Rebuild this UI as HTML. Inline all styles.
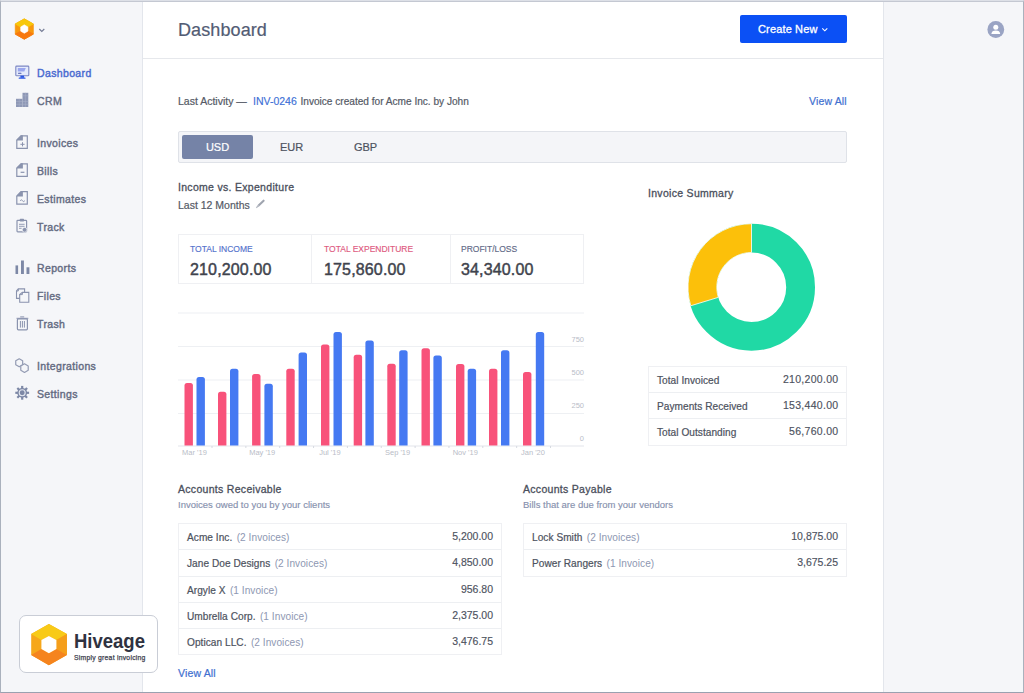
<!DOCTYPE html>
<html><head><meta charset="utf-8"><style>
*{box-sizing:border-box;margin:0;padding:0}
html,body{width:1024px;height:693px;overflow:hidden;background:#fff}
body{font-family:"Liberation Sans",sans-serif;position:relative;color:#4a4f5c}
.a{position:absolute;white-space:nowrap}
svg{position:absolute;overflow:visible;left:0;top:0}
.sb{font-weight:400;-webkit-text-stroke-width:0.3px;letter-spacing:0.3px}
#frame{position:absolute;left:0;top:0;width:1024px;height:693px;border-top:2px solid #dde0e7;border-left:1px solid #aab1bd;border-right:1px solid #aab1bd;border-bottom:1px solid #9aa1b0;z-index:50;pointer-events:none}
#frame:before{content:"";position:absolute;left:0;right:0;top:-1px;height:1px;background:#c4c8d2}
#side{position:absolute;left:0;top:0;width:143px;height:693px;background:#f5f6f9;border-right:1px solid #e3e6ec}
#main{position:absolute;left:143px;top:0;width:740px;height:693px;background:#fff}
#right{position:absolute;left:883px;top:0;width:141px;height:693px;background:#f5f6f9;border-left:1px solid #e3e6ec}
#hdr{position:absolute;left:143px;top:0;width:740px;height:59px;border-bottom:1px solid #e6e8ec}
.nav{font-size:10.5px;color:#646b82;left:37px;line-height:12px;letter-spacing:0.36px;-webkit-text-stroke-width:0.4px}
.nav.on{color:#4869d0}
.t{font-size:10.5px;line-height:12px}
.box{position:absolute;border:1px solid #eff0f3;background:#fff}
.row{position:absolute;left:0;right:0;height:27px;border-top:1px solid #edeff2}
.row:first-child{border-top:none}
.row .l{position:absolute;left:8px;top:7.5px;font-size:10.1px;line-height:12px;color:#4d525e;white-space:nowrap;letter-spacing:0.05px;-webkit-text-stroke-width:0.2px}
.row .r{position:absolute;right:8px;top:6px;font-size:10.5px;line-height:12px;color:#4d525e;white-space:nowrap;-webkit-text-stroke-width:0.15px}
.sum .r{letter-spacing:0.3px;right:7.5px}
.row .l span{color:#8e97b2;-webkit-text-stroke-width:0;margin-left:1.5px}
.lbl{font-size:8.5px;line-height:10px;-webkit-text-stroke-width:0.15px}
.big{font-size:16px;line-height:18px;color:#3f434d;-webkit-text-stroke-width:0.45px;letter-spacing:0.15px}
.ax{font-size:7.5px;color:#b9bdc7;line-height:9px}
</style></head><body>
<div id="side"></div><div id="main"></div><div id="right"></div><div id="hdr"></div>
<svg width="60" height="50">
  <polygon points="24.30,18.90 33.30,23.98 33.30,34.12 24.30,39.20 15.30,34.12 15.30,23.98" fill="#f8980d" stroke="#f8980d" stroke-width="0.8" stroke-linejoin="round"/>
  <polygon points="24.30,18.90 33.30,23.98 27.90,26.95 24.30,24.85 20.70,26.95 15.30,23.98" fill="#f8c80a" stroke="#f8c80a" stroke-width="0.8" stroke-linejoin="round"/>
  <polygon points="15.30,34.12 24.30,39.20 33.30,34.12 27.90,31.15 24.30,33.25 20.70,31.15" fill="#f7790f" stroke="#f7790f" stroke-width="0.8" stroke-linejoin="round"/>
  <polygon points="24.30,24.85 27.90,26.95 27.90,31.15 24.30,33.25 20.70,31.15 20.70,26.95" fill="#fff" stroke="#fff" stroke-width="0.6" stroke-linejoin="round"/>
  <path d="M39.3,29 L41.8,31.4 L44.3,29" fill="none" stroke="#757d96" stroke-width="1.2"/>
</svg>
<svg width="40" height="420">
  <rect x="15.8" y="66.1" width="13" height="9.6" rx="0.8" fill="#e4eafc" stroke="#7c87c4" stroke-width="1.1"/>
  <polygon points="17.8,67.9 25.8,67.9 24.3,71.5 17.8,71.5" fill="#9aa6ee"/>
  <rect x="18" y="72.7" width="3.5" height="1.1" rx="0.5" fill="#4b58a8"/>
  <rect x="20.4" y="75.6" width="3.7" height="2.2" fill="#2c57e4"/>
  <rect x="18.6" y="77.5" width="7" height="1.2" rx="0.4" fill="#2c57e4"/>
  <rect x="16" y="98.8" width="6.5" height="8.2" fill="#8e98b6"/>
  <rect x="22.5" y="92.8" width="5.8" height="14.2" fill="#8e98b6"/>
  <path d="M16,101.5H28.3M16,104.3H28.3M19.2,98.8V107M25.4,92.8V107M22.5,95.8H28.3" stroke="#aab2ca" stroke-width="0.5"/>
  <path d="M21,135.8 H27.3 V148.3 H16.8 V140.10000000000002 Z" fill="none" stroke="#8a93ae" stroke-width="1.2"/><polygon points="21,135.3 22.9,135.3 22.9,140.5 16.3,140.5" fill="#8a93ae"/><path d="M20.4,144.3H24.6M22.5,142.20000000000002V146.4" stroke="#8a93ae" stroke-width="1"/><path d="M21,163.8 H27.3 V176.3 H16.8 V168.10000000000002 Z" fill="none" stroke="#8a93ae" stroke-width="1.2"/><polygon points="21,163.3 22.9,163.3 22.9,168.5 16.3,168.5" fill="#8a93ae"/><path d="M20.6,172.3H24.4" stroke="#8a93ae" stroke-width="1.2"/><path d="M21,191.7 H27.3 V204.2 H16.8 V196.0 Z" fill="none" stroke="#8a93ae" stroke-width="1.2"/><polygon points="21,191.2 22.9,191.2 22.9,196.39999999999998 16.3,196.39999999999998" fill="#8a93ae"/><path d="M20.2,200.7 q1.1,-1.8 2.3,0 t2.3,0" fill="none" stroke="#8a93ae" stroke-width="1"/>
  <rect x="17" y="220.3" width="9.6" height="11.6" rx="0.8" fill="none" stroke="#8a93ae" stroke-width="1.2"/>
  <rect x="19.8" y="218.8" width="4.2" height="2.6" rx="0.6" fill="#8a93ae"/>
  <path d="M19,224.3H24.6M19,226.3H24.6M19,228.3H21.6" stroke="#8a93ae" stroke-width="0.9"/>
  <circle cx="24.6" cy="229.8" r="2.4" fill="#8a93ae" stroke="#f5f6f9" stroke-width="0.7"/>
  <rect x="15.5" y="265.4" width="2.6" height="8.6" fill="#7d88a6"/>
  <rect x="21" y="260.5" width="2.9" height="13.5" fill="#7d88a6"/>
  <rect x="26.5" y="267.3" width="2.9" height="6.7" fill="#7d88a6"/>
  <path d="M18.3,288.9 H24.6 V298.4 H16.5 V291 Z" fill="none" stroke="#8a93ae" stroke-width="1.1"/>
  <path d="M22.4,292.4 H28.8 V302.3 H19.7 V294.6 Z" fill="#f5f6f9" stroke="#8a93ae" stroke-width="1.1"/>
  <path d="M18.3,288.9 V291 H16.5 M22.4,292.4 V294.6 H19.7" fill="none" stroke="#8a93ae" stroke-width="1"/>
  <rect x="17.4" y="318.8" width="10" height="11" rx="1" fill="none" stroke="#8a93ae" stroke-width="1.2"/>
  <path d="M16.5,318.3H28.3M20.2,316.9H24.2M20.4,321V327.6M22.4,321V327.6M24.4,321V327.6" stroke="#8a93ae" stroke-width="1"/>
  <polygon points="22.66,364.80 19.20,366.80 15.74,364.80 15.74,360.80 19.20,358.80 22.66,360.80" fill="#f5f6f9" stroke="#939bb3" stroke-width="1.2" stroke-linejoin="round"/>
  <polygon points="28.22,370.25 24.50,372.40 20.78,370.25 20.78,365.95 24.50,363.80 28.22,365.95" fill="#f5f6f9" stroke="#939bb3" stroke-width="1.2" stroke-linejoin="round"/>
  <g transform="translate(22.2,392.8)">
    <circle r="4.9" fill="#7d88a6"/>
    <g fill="#7d88a6"><rect x="-1.1" y="-6.9" width="2.2" height="13.8"/><rect x="-1.1" y="-6.9" width="2.2" height="13.8" transform="rotate(45)"/><rect x="-1.1" y="-6.9" width="2.2" height="13.8" transform="rotate(90)"/><rect x="-1.1" y="-6.9" width="2.2" height="13.8" transform="rotate(135)"/></g>
    <circle r="3" fill="none" stroke="#e3e7f0" stroke-width="1.1"/><circle r="1.3" fill="#7d88a6"/>
  </g>
</svg>
<div class="a nav on" style="top:67px">Dashboard</div>
<div class="a nav" style="top:95px">CRM</div>
<div class="a nav" style="top:137px">Invoices</div>
<div class="a nav" style="top:165px">Bills</div>
<div class="a nav" style="top:193px">Estimates</div>
<div class="a nav" style="top:221px">Track</div>
<div class="a nav" style="top:262px">Reports</div>
<div class="a nav" style="top:290px">Files</div>
<div class="a nav" style="top:318px">Trash</div>
<div class="a nav" style="top:360px">Integrations</div>
<div class="a nav" style="top:388px">Settings</div>
<div class="a sb" style="left:178px;top:20px;font-size:18px;color:#525c74;line-height:20px;letter-spacing:0.1px;-webkit-text-stroke-width:0.2px">Dashboard</div>
<div class="a" style="left:740px;top:15px;width:107px;height:28px;background:#0b50f5;border-radius:2px"></div>
<div class="a" style="left:758px;top:23px;font-size:11px;line-height:12px;color:#fff;letter-spacing:0.15px;-webkit-text-stroke-width:0.3px">Create New</div>
<svg width="1" height="1"><path d="M822.3,28.3 L824.8,30.8 L827.3,28.3" fill="none" stroke="#fff" stroke-width="1.1"/></svg>
<svg style="left:986px;top:20px" width="20" height="20">
  <circle cx="9.8" cy="9.5" r="8.4" fill="#9aa4c4"/>
  <circle cx="9.8" cy="7.3" r="2.5" fill="#fff"/>
  <path d="M5.4,14 Q5.7,10.6 9.8,10.6 Q13.9,10.6 14.2,14 Z" fill="#fff"/>
</svg>
<div class="a t" style="left:178px;top:95px;color:#555a66;-webkit-text-stroke-width:0.2px">Last Activity —</div>
<div class="a t" style="left:253px;top:95px;color:#3d70d6;-webkit-text-stroke-width:0.15px">INV-0246</div>
<div class="a t" style="left:300.5px;top:96px;font-size:10.1px;color:#555a66;-webkit-text-stroke-width:0.2px">Invoice created for Acme Inc. by John</div>
<div class="a t" style="left:809px;top:95px;color:#4170d0;letter-spacing:0.15px;-webkit-text-stroke-width:0.2px">View All</div>
<div class="a" style="left:178px;top:131px;width:669px;height:32px;background:#f4f5f8;border:1px solid #dfe2e8;border-radius:2px"></div>
<div class="a" style="left:182px;top:135px;width:71px;height:24px;background:#7583a7;border-radius:2px"></div>
<div class="a" style="left:182px;top:141px;width:71px;text-align:center;font-size:11px;line-height:12px;color:#fff;-webkit-text-stroke-width:0.2px">USD</div>
<div class="a" style="left:256px;top:141px;width:71px;text-align:center;font-size:11px;line-height:12px;color:#4d525e;-webkit-text-stroke-width:0.2px">EUR</div>
<div class="a" style="left:330px;top:141px;width:71px;text-align:center;font-size:11px;line-height:12px;color:#4d525e;-webkit-text-stroke-width:0.2px">GBP</div>
<div class="a t sb" style="left:178px;top:181px;color:#4a4f5c">Income vs. Expenditure</div>
<div class="a t" style="left:178px;top:199px;color:#555a66;-webkit-text-stroke-width:0.2px">Last 12 Months</div>
<svg width="1" height="1"><path d="M258.6,205.6 L263.6,200.7" stroke="#9fa4af" stroke-width="2.1" stroke-linecap="round"/><path d="M256.3,207.8 L259.2,205" stroke="#b4b8c2" stroke-width="1.2"/></svg>
<div class="box" style="left:178px;top:234px;width:406px;height:50px"></div>
<div class="a" style="left:311px;top:235px;width:1px;height:48px;background:#eff0f3"></div>
<div class="a" style="left:450px;top:235px;width:1px;height:48px;background:#eff0f3"></div>
<div class="a lbl" style="left:190px;top:244px;color:#5472cc">TOTAL INCOME</div>
<div class="a lbl" style="left:324px;top:244px;color:#de5a80">TOTAL EXPENDITURE</div>
<div class="a lbl" style="left:461px;top:244px;color:#5f6987">PROFIT/LOSS</div>
<div class="a big" style="left:190px;top:261px">210,200.00</div>
<div class="a big" style="left:324px;top:261px">175,860.00</div>
<div class="a big" style="left:461px;top:261px">34,340.00</div>
<svg width="1" height="1"><rect x="178" y="312.5" width="406" height="1" fill="#eef0f3"/><rect x="178" y="346" width="406" height="1" fill="#eef0f3"/><rect x="178" y="379.5" width="406" height="1" fill="#eef0f3"/><rect x="178" y="413" width="406" height="1" fill="#eef0f3"/><rect x="178" y="445.5" width="406" height="1" fill="#e3e6eb"/><rect x="211.50" y="446" width="1" height="2" fill="#d6dae1"/><rect x="245.35" y="446" width="1" height="2" fill="#d6dae1"/><rect x="279.20" y="446" width="1" height="2" fill="#d6dae1"/><rect x="313.05" y="446" width="1" height="2" fill="#d6dae1"/><rect x="346.90" y="446" width="1" height="2" fill="#d6dae1"/><rect x="380.75" y="446" width="1" height="2" fill="#d6dae1"/><rect x="414.60" y="446" width="1" height="2" fill="#d6dae1"/><rect x="448.45" y="446" width="1" height="2" fill="#d6dae1"/><rect x="482.30" y="446" width="1" height="2" fill="#d6dae1"/><rect x="516.15" y="446" width="1" height="2" fill="#d6dae1"/><rect x="550.00" y="446" width="1" height="2" fill="#d6dae1"/><path d="M184.50,445.5 V385.50 Q184.50,383.00 187.00,383.00 H190.40 Q192.90,383.00 192.90,385.50 V445.5 Z" fill="#f8527a"/><path d="M196.50,445.5 V379.50 Q196.50,377.00 199.00,377.00 H202.40 Q204.90,377.00 204.90,379.50 V445.5 Z" fill="#4579f2"/><path d="M218.00,445.5 V394.20 Q218.00,391.70 220.50,391.70 H223.90 Q226.40,391.70 226.40,394.20 V445.5 Z" fill="#f8527a"/><path d="M230.00,445.5 V371.30 Q230.00,368.80 232.50,368.80 H235.90 Q238.40,368.80 238.40,371.30 V445.5 Z" fill="#4579f2"/><path d="M252.10,445.5 V376.50 Q252.10,374.00 254.60,374.00 H258.00 Q260.50,374.00 260.50,376.50 V445.5 Z" fill="#f8527a"/><path d="M264.40,445.5 V386.30 Q264.40,383.80 266.90,383.80 H270.30 Q272.80,383.80 272.80,386.30 V445.5 Z" fill="#4579f2"/><path d="M286.30,445.5 V371.30 Q286.30,368.80 288.80,368.80 H292.20 Q294.70,368.80 294.70,371.30 V445.5 Z" fill="#f8527a"/><path d="M298.60,445.5 V354.90 Q298.60,352.40 301.10,352.40 H304.50 Q307.00,352.40 307.00,354.90 V445.5 Z" fill="#4579f2"/><path d="M321.00,445.5 V347.10 Q321.00,344.60 323.50,344.60 H326.90 Q329.40,344.60 329.40,347.10 V445.5 Z" fill="#f8527a"/><path d="M333.50,445.5 V334.40 Q333.50,331.90 336.00,331.90 H339.40 Q341.90,331.90 341.90,334.40 V445.5 Z" fill="#4579f2"/><path d="M353.70,445.5 V357.20 Q353.70,354.70 356.20,354.70 H359.60 Q362.10,354.70 362.10,357.20 V445.5 Z" fill="#f8527a"/><path d="M365.40,445.5 V342.90 Q365.40,340.40 367.90,340.40 H371.30 Q373.80,340.40 373.80,342.90 V445.5 Z" fill="#4579f2"/><path d="M387.30,445.5 V366.20 Q387.30,363.70 389.80,363.70 H393.20 Q395.70,363.70 395.70,366.20 V445.5 Z" fill="#f8527a"/><path d="M399.20,445.5 V352.80 Q399.20,350.30 401.70,350.30 H405.10 Q407.60,350.30 407.60,352.80 V445.5 Z" fill="#4579f2"/><path d="M421.50,445.5 V350.80 Q421.50,348.30 424.00,348.30 H427.40 Q429.90,348.30 429.90,350.80 V445.5 Z" fill="#f8527a"/><path d="M433.40,445.5 V358.00 Q433.40,355.50 435.90,355.50 H439.30 Q441.80,355.50 441.80,358.00 V445.5 Z" fill="#4579f2"/><path d="M456.00,445.5 V366.50 Q456.00,364.00 458.50,364.00 H461.90 Q464.40,364.00 464.40,366.50 V445.5 Z" fill="#f8527a"/><path d="M467.70,445.5 V371.30 Q467.70,368.80 470.20,368.80 H473.60 Q476.10,368.80 476.10,371.30 V445.5 Z" fill="#4579f2"/><path d="M489.00,445.5 V371.30 Q489.00,368.80 491.50,368.80 H494.90 Q497.40,368.80 497.40,371.30 V445.5 Z" fill="#f8527a"/><path d="M501.00,445.5 V352.80 Q501.00,350.30 503.50,350.30 H506.90 Q509.40,350.30 509.40,352.80 V445.5 Z" fill="#4579f2"/><path d="M523.00,445.5 V374.50 Q523.00,372.00 525.50,372.00 H528.90 Q531.40,372.00 531.40,374.50 V445.5 Z" fill="#f8527a"/><path d="M535.80,445.5 V334.40 Q535.80,331.90 538.30,331.90 H541.70 Q544.20,331.90 544.20,334.40 V445.5 Z" fill="#4579f2"/></svg>
<div class="a ax" style="left:554px;width:30px;text-align:right;top:335px">750</div>
<div class="a ax" style="left:554px;width:30px;text-align:right;top:368px">500</div>
<div class="a ax" style="left:554px;width:30px;text-align:right;top:401px">250</div>
<div class="a ax" style="left:554px;width:30px;text-align:right;top:434px">0</div>
<div class="a ax" style="left:169.5px;width:50px;text-align:center;top:448px">Mar &#39;19</div>
<div class="a ax" style="left:237.2px;width:50px;text-align:center;top:448px">May &#39;19</div>
<div class="a ax" style="left:304.9px;width:50px;text-align:center;top:448px">Jul &#39;19</div>
<div class="a ax" style="left:372.6px;width:50px;text-align:center;top:448px">Sep &#39;19</div>
<div class="a ax" style="left:440.3px;width:50px;text-align:center;top:448px">Nov &#39;19</div>
<div class="a ax" style="left:508.0px;width:50px;text-align:center;top:448px">Jan &#39;20</div>
<div class="a t sb" style="left:648px;top:187px;color:#4a4f5c">Invoice Summary</div>
<svg width="1" height="1"><circle cx="751.5" cy="287.2" r="49.1" fill="none" stroke="#20d9a5" stroke-width="28.799999999999997"/><path d="M751.5,223.7 A63.5,63.5 0 0 0 690.77,305.77 L718.32,297.35 A34.7,34.7 0 0 1 751.5,252.5 Z" fill="#fcc00a" stroke="#fff" stroke-width="0.8"/></svg>
<div class="box sum" style="left:648px;top:366px;width:199px;height:80px">
 <div class="row" style="top:0"><div class="l">Total Invoiced</div><div class="r">210,200.00</div></div>
 <div class="row" style="top:25px"><div class="l">Payments Received</div><div class="r">153,440.00</div></div>
 <div class="row" style="top:51px"><div class="l">Total Outstanding</div><div class="r">56,760.00</div></div>
</div>
<div class="a t sb" style="left:178px;top:483px;color:#4a4f5c">Accounts Receivable</div><div class="a" style="left:178px;top:499px;font-size:9.5px;line-height:11px;color:#8791ae;-webkit-text-stroke-width:0.15px">Invoices owed to you by your clients</div><div class="box" style="left:178px;top:523px;width:324px;height:132px"><div class="row" style="top:0px"><div class="l">Acme Inc. <span>(2 Invoices)</span></div><div class="r">5,200.00</div></div><div class="row" style="top:25px"><div class="l">Jane Doe Designs <span>(2 Invoices)</span></div><div class="r">4,850.00</div></div><div class="row" style="top:52px"><div class="l">Argyle X <span>(1 Invoice)</span></div><div class="r">956.80</div></div><div class="row" style="top:78px"><div class="l">Umbrella Corp. <span>(1 Invoice)</span></div><div class="r">2,375.00</div></div><div class="row" style="top:104px"><div class="l">Optican LLC. <span>(2 Invoices)</span></div><div class="r">3,476.75</div></div></div>
<div class="a t" style="left:178px;top:667px;color:#4170d0;letter-spacing:0.15px;-webkit-text-stroke-width:0.2px">View All</div>
<div class="a t sb" style="left:523px;top:483px;color:#4a4f5c">Accounts Payable</div><div class="a" style="left:523px;top:499px;font-size:9.5px;line-height:11px;color:#8791ae;-webkit-text-stroke-width:0.15px">Bills that are due from your vendors</div><div class="box" style="left:523px;top:523px;width:324px;height:54px"><div class="row" style="top:0px"><div class="l">Lock Smith <span>(2 Invoices)</span></div><div class="r">10,875.00</div></div><div class="row" style="top:25px"><div class="l">Power Rangers <span>(1 Invoice)</span></div><div class="r">3,675.25</div></div></div>
<div class="a" style="left:19px;top:615px;width:139px;height:58px;background:#fff;border:1px solid #c9cdd6;border-radius:7px"></div>
<svg width="1" height="1">
  <polygon points="48.9,624 66.9,634.1 66.9,655.1 48.9,665.3 31.2,655.1 31.2,634.1" fill="#f6a71b"/>
  <polygon points="48.9,624 66.9,634.1 56.4,640.1 48.9,636 41.4,640.1 31.2,634.1" fill="#f8ca17"/>
  <polygon points="66.9,634.1 66.9,655.1 56.4,649.1 56.4,640.1" fill="#f59e1a"/>
  <polygon points="31.2,655.1 48.9,665.3 66.9,655.1 56.4,649.1 48.9,653.3 41.4,649.1" fill="#f5841e"/>
  <polygon points="48.9,636 56.4,640.1 56.4,649.1 48.9,653.3 41.4,649.1 41.4,640.1" fill="#fff"/>
</svg>
<div class="a" style="left:74px;top:630px;font-size:20px;line-height:22px;font-weight:700;color:#2f3240;transform:scaleX(0.925);transform-origin:0 0">Hiveage</div>
<div class="a" style="left:74px;top:654px;font-size:6.8px;line-height:8px;color:#3f4350;-webkit-text-stroke-width:0.25px;letter-spacing:0.25px">Simply great invoicing</div>
<div id="frame"></div>
</body></html>
